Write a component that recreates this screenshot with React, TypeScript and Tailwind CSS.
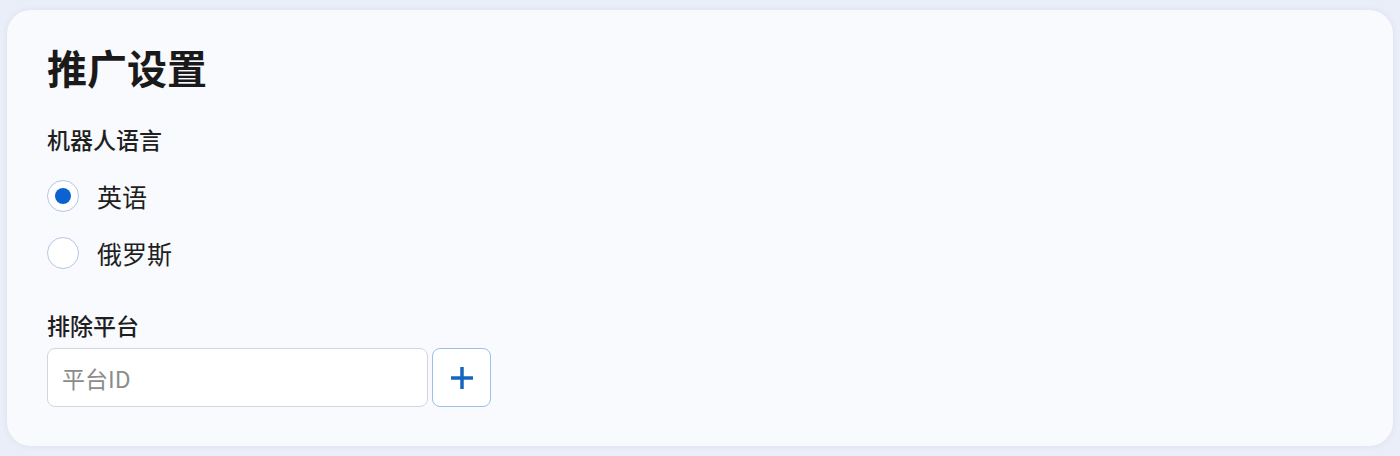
import { useState } from "react";

const font = { fontFamily: '"Noto Sans CJK SC", "Noto Sans", sans-serif' };

const languages = [
    { id: "en", label: "英语" },
    { id: "ru", label: "俄罗斯" },
];

function Radio({ checked, label, onSelect }: { checked: boolean; label: string; onSelect: () => void }) {
    return (
        <label className="flex h-[57px] cursor-pointer items-center gap-[18px]" onClick={onSelect}>
            <span className="flex h-[32px] w-[32px] items-center justify-center rounded-full border border-[#b5c6e6] bg-white">
                {checked && <span className="h-[16px] w-[16px] rounded-full bg-[#0b63d1]" />}
            </span>
            <span className="text-[25px] leading-[30px] text-[#1f1f1f]">{label}</span>
        </label>
    );
}

export default function App() {
    const [lang, setLang] = useState("en");
    const [platform, setPlatform] = useState("");

    return (
        <div className="min-h-[456px] w-full bg-[#e9eef8] px-[7px] pt-[10px] pb-[11px]" style={font}>
            <div className="rounded-[24px] bg-[#f8fafd] pt-[33px] pb-[39px] pl-[40px] shadow-[0_0_6px_rgba(120,140,180,0.12)]">
                <h1 className="text-[40px] font-bold leading-[48px] text-[#1a1a1a]">推广设置</h1>

                <div className="mt-[33px] text-[23px] font-medium leading-[30px] text-[#1f1f1f]">机器人语言</div>
                <div className="mt-[13px] flex flex-col">
                    {languages.map((l) => (
                        <Radio key={l.id} checked={lang === l.id} label={l.label} onSelect={() => setLang(l.id)} />
                    ))}
                </div>

                <div className="mt-[29px] text-[23px] font-medium leading-[30px] text-[#1f1f1f]">排除平台</div>
                <div className="mt-[8px] flex gap-[4px]">
                    <input
                        value={platform}
                        onChange={(e) => setPlatform(e.target.value)}
                        placeholder="平台ID"
                        className="h-[59px] w-[381px] rounded-[8px] border border-[#d3d6dc] bg-white px-[14px] text-[23px] text-[#1f1f1f] outline-none placeholder:text-[#8c8c8c]"
                        style={font}
                    />
                    <button className="flex h-[59px] w-[59px] items-center justify-center rounded-[8px] border border-[#9cc0ee] bg-white">
                        <svg width="24" height="24" viewBox="0 0 24 24" fill="none" stroke="#1565c0" strokeWidth="3.5" strokeLinecap="butt">
                            <path d="M12 1v22M1 12h22" />
                        </svg>
                    </button>
                </div>
            </div>
        </div>
    );
}
